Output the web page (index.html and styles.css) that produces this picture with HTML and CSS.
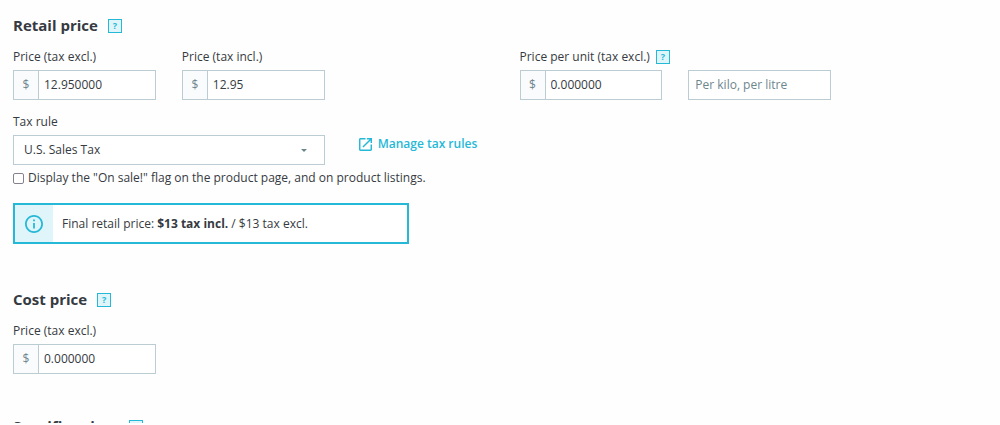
FILE: index.html
```
<!DOCTYPE html>
<html lang="en">
<head>
    <meta charset="UTF-8">
    <title>Product pricing</title>
    <link rel="stylesheet" href="styles.css">
</head>
<body>
    <form class="pricing">
        <section class="section">
            <h2 class="title">Retail price <button type="button" class="help" aria-label="Help: retail price">?</button></h2>

            <div class="row prices">
                <div class="col-2">
                    <label class="label" for="price-excl">Price (tax excl.)</label>
                    <div class="input-group">
                        <span class="currency">$</span>
                        <input type="text" id="price-excl" value="12.950000">
                    </div>
                </div>
                <div class="col-2">
                    <label class="label" for="price-incl">Price (tax incl.)</label>
                    <div class="input-group">
                        <span class="currency">$</span>
                        <input type="text" id="price-incl" value="12.95">
                    </div>
                </div>
                <div class="col-2 unit-price">
                    <div class="label">
                        <label for="unit-price">Price per unit (tax excl.)</label>
                        <button type="button" class="help" aria-label="Help: price per unit">?</button>
                    </div>
                    <div class="input-group">
                        <span class="currency">$</span>
                        <input type="text" id="unit-price" value="0.000000">
                    </div>
                </div>
                <div class="col-2 unit">
                    <div class="input-group">
                        <input type="text" id="unity" placeholder="Per kilo, per litre" aria-label="Unit">
                    </div>
                </div>
            </div>

            <div class="row">
                <div class="col-4">
                    <label class="label" for="tax-rule">Tax rule</label>
                    <div class="select">
                        <select id="tax-rule">
                            <option>U.S. Sales Tax</option>
                        </select>
                        <svg class="caret" viewBox="0 0 6 3" aria-hidden="true"><path d="M0 0h6L3 3z"/></svg>
                    </div>
                </div>
                <div class="col-4 manage">
                    <a class="link" href="#">
                        <svg viewBox="3 3 18 18" aria-hidden="true"><path d="M19 19H5V5h7V3H5c-1.100 0-2 .9-2 2v14c0 1.100.9 2 2 2h14c1.100 0 2-.9 2-2v-7h-2v7zM14 3v2h3.590l-9.830 9.830 1.410 1.410L19 6.410V10h2V3h-7z"/></svg>
                        Manage tax rules
                    </a>
                </div>
            </div>

            <label class="checkbox">
                <input type="checkbox">
                Display the "On sale!" flag on the product page, and on product listings.
            </label>

            <div class="row">
                <div class="col-5 alert">
                    <span class="alert-icon">
                        <svg viewBox="2 2 20 20" aria-hidden="true"><path d="M11 17h2v-6h-2v6zm1-15C6.480 2 2 6.480 2 12s4.480 10 10 10 10-4.480 10-10S17.520 2 12 2zm0 18c-4.410 0-8-3.590-8-8s3.590-8 8-8 8 3.590 8 8-3.590 8-8 8zM11 9h2V7h-2v2z"/></svg>
                    </span>
                    <p>Final retail price: <strong>$13 tax incl.</strong> / $13 tax excl.</p>
                </div>
            </div>
        </section>

        <section class="section">
            <h2 class="title">Cost price <button type="button" class="help" aria-label="Help: cost price">?</button></h2>
            <div class="row">
                <div class="col-2">
                    <label class="label" for="cost-price">Price (tax excl.)</label>
                    <div class="input-group">
                        <span class="currency">$</span>
                        <input type="text" id="cost-price" value="0.000000">
                    </div>
                </div>
            </div>
        </section>

        <section class="section">
            <h2 class="title">Specific prices <button type="button" class="help" aria-label="Help: specific prices">?</button></h2>
        </section>
    </form>
</body>
</html>
```
FILE: styles.css
```
:root {
    --primary: #25b9d7;
    --primary-light: #dff5f9;
    --text: #363a41;
    --muted: #6c868e;
    --border: #bbcdd2;
}

* {
    box-sizing: border-box;
}

body {
    margin: 0;
    background: #fefefe;
    color: var(--text);
    font-family: "Open Sans", sans-serif;
    font-size: 12px;
    line-height: 18px;
}

.pricing {
    height: calc(100vh - 2px);
    padding: 15px 0 0 13px;
    overflow: hidden;
}

.section {
    margin-bottom: 42px;
}

.title {
    display: flex;
    align-items: center;
    gap: 10px;
    margin: 0 0 13px;
    font-size: 15px;
    line-height: 20px;
    font-weight: 700;
}

.help {
    flex-shrink: 0;
    width: 14px;
    height: 14px;
    padding: 0;
    border: 1px solid var(--primary);
    background: var(--primary-light);
    color: var(--primary);
    font-family: inherit;
    font-size: 9px;
    line-height: 12px;
    font-weight: 700;
    text-align: center;
}

.title .help {
    margin-top: 2px;
}

.row {
    display: grid;
    grid-template-columns: repeat(12, 1fr);
    column-gap: 26px;
}

.prices {
    margin-bottom: 13px;
}

.col-2 {
    grid-column: span 2;
}

.col-4 {
    grid-column: span 4;
}

.col-5 {
    grid-column: span 5;
}

.unit-price {
    grid-column: 7 / span 2;
}

.unit {
    align-self: end;
}

.label {
    display: flex;
    align-items: center;
    gap: 6px;
    margin-bottom: 4px;
    white-space: nowrap;
}

.input-group {
    display: flex;
    height: 30px;
    border: 1px solid var(--border);
    background: #fff;
}

.input-group input {
    flex: 1;
    min-width: 0;
    padding: 0 6px;
    border: 0;
    background: transparent;
    color: var(--text);
    font: inherit;
}

.input-group input::placeholder {
    color: var(--muted);
    opacity: 1;
}

.currency {
    width: 25px;
    border-right: 1px solid var(--border);
    background: #fafbfc;
    color: var(--muted);
    line-height: 28px;
    text-align: center;
}

.currency + input {
    padding-left: 5px;
}

.select {
    position: relative;
}

.select select {
    display: block;
    width: 100%;
    height: 30px;
    padding: 0 10px;
    border: 1px solid var(--border);
    border-radius: 0;
    background: #fff;
    color: var(--text);
    font: inherit;
    appearance: none;
}

.caret {
    position: absolute;
    top: 14px;
    right: 18px;
    width: 6px;
    height: 3px;
    fill: var(--muted);
    pointer-events: none;
}

.manage {
    align-self: end;
    padding: 0 0 12px 8px;
}

.link {
    display: flex;
    align-items: center;
    gap: 6px;
    color: var(--primary);
    font-weight: 600;
    text-decoration: none;
}

.link svg {
    width: 13px;
    height: 13px;
    fill: currentColor;
}

.checkbox {
    display: flex;
    align-items: center;
    gap: 4px;
    margin: 4px 0 16px;
}

.checkbox input {
    width: 11px;
    height: 11px;
    margin: 0;
    border: 1px solid #85818c;
    border-radius: 2px;
    background: #fff;
    appearance: none;
}

.alert {
    display: flex;
    align-items: center;
    height: 41px;
    margin-bottom: 3px;
    border: 2px solid var(--primary);
    background: #fff;
}

.alert-icon {
    display: flex;
    align-items: center;
    justify-content: center;
    align-self: stretch;
    width: 38px;
    background: var(--primary-light);
}

.alert-icon svg {
    width: 18px;
    height: 18px;
    fill: var(--primary);
}

.alert p {
    margin: 0 0 0 9px;
}
```
